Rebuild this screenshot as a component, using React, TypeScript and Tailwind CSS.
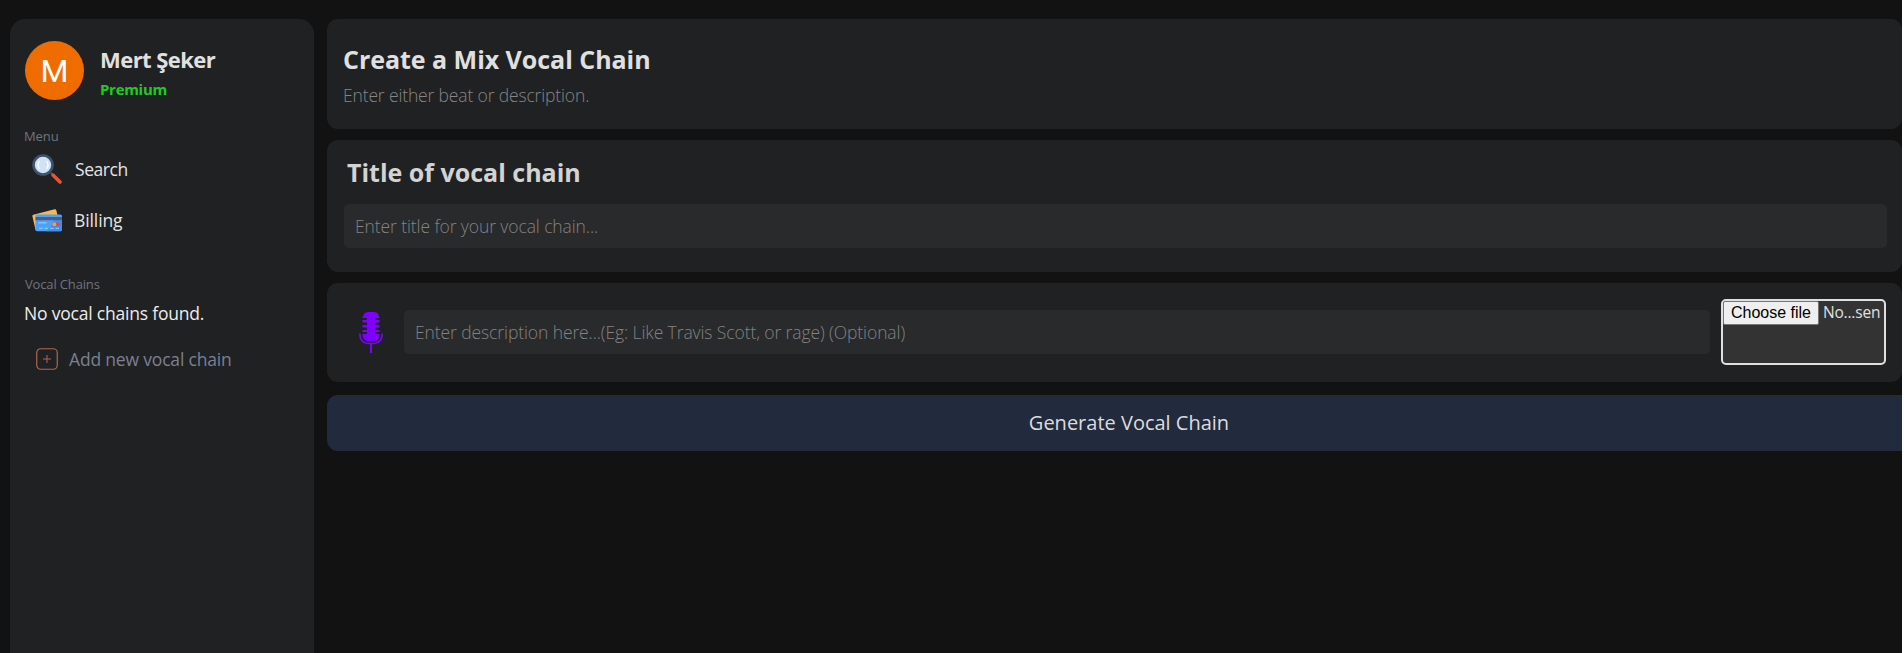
function SearchIcon() {
  return (
    <svg viewBox="0 0 30 30" className="size-[30px] shrink-0">
      <path d="M19 19l2.500 2.500" stroke="#4a5f73" strokeWidth="2" />
      <path d="M21.200 21.200l6.800 6.800" stroke="#e2553a" strokeWidth="3.600" strokeLinecap="round" />
      <circle cx="11" cy="11" r="9.500" fill="#cfe3f3" stroke="#3d536b" strokeWidth="2.600" />
      <path d="M7.200 7.500q-2.400 3.500 0 7M14.800 7.500q2.400 3.500 0 7" stroke="#fff" strokeWidth="1.300" fill="none" strokeLinecap="round" />
    </svg>
  );
}

function CardIcon() {
  return (
    <svg viewBox="0 0 30 30" className="size-[30px] shrink-0">
      <path d="M1.300 9.700L22.600 4.200q1.300-.3 1.700 1L29 24 4.500 25.700q-.8 0-1-.9L.4 11.200q-.2-1.200.9-1.500z" fill="#f3b958" />
      <rect x="3.500" y="9.500" width="26.500" height="16.700" rx="1.600" fill="#4fa0f8" />
      <path d="M22 12h8v12.700q0 1.500-1.500 1.500H14q7-5 8-14z" fill="#438cf0" />
      <rect x="3.500" y="12" width="26.500" height="3.200" fill="#4c5d86" />
      <path d="M6.500 17.800h8" stroke="#8fd0ff" strokeWidth="1.200" />
      <path d="M7 23.300h3.500M12.500 23.300H16M18 23.300h3.500M23.500 23.300H27" stroke="#8ac4ff" strokeWidth="1.300" />
      <circle cx="25.800" cy="19.200" r="1.900" fill="#e8453c" />
      <circle cx="22.400" cy="19.200" r="1.900" fill="#f4a23a" />
    </svg>
  );
}

function PlusIcon() {
  return (
    <svg viewBox="0 0 22 22" className="size-[22px] shrink-0" fill="none" stroke="#b0674a">
      <rect x="0.750" y="0.750" width="20.500" height="20.500" rx="4" strokeWidth="1.200" />
      <path d="M11 7v8M7 11h8" />
    </svg>
  );
}

function MicIcon() {
  return (
    <svg viewBox="0 0 24 42" className="h-[42px] w-6 shrink-0" fill="#7f00ff">
      <path d="M3.500 6Q4.500 0 9 0h6q4.500 0 5.500 6H16v2h4.500v2.500H16V13h4.500v2.500H16V18h4.500v2H16v2h4.500v1q-.5 6-5.500 6H9q-5 0-5.500-6v-1H8v-2H3.500v-2H8v-2.500H3.500V13H8v-2.500H3.500V8H8V6z" />
      <path d="M.8 21.500Q.8 31 9 31.500h6q8.200-.5 8.200-10" fill="none" stroke="#7f00ff" strokeWidth="1.600" />
      <rect x="11" y="31.500" width="2" height="9.500" />
    </svg>
  );
}

const panel = "rounded-[11px] bg-[#202122]";
const input =
  "h-11 min-w-0 flex-1 rounded-[5px] bg-[#292a2b] px-[11px] text-[17.5px] font-light tracking-[-0.1px] text-white outline-none placeholder:text-[#828282]";

export default function App() {
  return (
    <div className="flex h-screen bg-white pr-0.5 font-['Open_Sans','Noto_Sans',sans-serif]">
      <div className="flex h-full min-w-0 flex-1 overflow-hidden bg-[#121212] pt-[19px] pl-2.5">
        <aside className="mr-[13px] h-[700px] w-[304px] shrink-0 rounded-t-[15px] bg-[#202123] px-[15px] pt-[22px]">
          <div className="flex">
            <div className="flex size-[59px] items-center justify-center rounded-full bg-[#ef6c00] pt-px font-['Roboto',sans-serif] text-[32px] text-white">
              M
            </div>
            <div className="ml-4 pt-[3px]">
              <h2 className="text-[22px] leading-[30px] font-bold tracking-[-0.55px] text-[#e0e0e0]">Mert Şeker</h2>
              <p className="mt-[3px] text-[15px] leading-6 font-bold tracking-[-0.3px] text-[#21cb21]">Premium</p>
            </div>
          </div>
          <p className="mt-[25px] -ml-px text-[13px] leading-5 tracking-[-0.1px] text-[#6f7480]">Menu</p>
          <nav>
            <a className="mt-[6px] flex h-[34px] items-center pl-[7px]">
              <SearchIcon />
              <span className="ml-[13px] text-[17.5px] leading-6 tracking-[-0.45px] text-[#e4e4e4]">Search</span>
            </a>
            <a className="mt-[17px] flex h-[34px] items-center pl-[7px]">
              <CardIcon />
              <span className="ml-3 text-[17.5px] leading-6 tracking-[-0.1px] text-[#e4e4e4]">Billing</span>
            </a>
          </nav>
          <p className="mt-[37px] text-[13px] leading-5 tracking-[-0.15px] text-[#6f7480]">Vocal Chains</p>
          <p className="mt-[7px] -ml-px text-[17.5px] leading-6 tracking-[-0.2px] text-[#ececec]">No vocal chains found.</p>
          <button className="mt-[22px] flex items-center pl-[11px]">
            <PlusIcon />
            <span className="ml-[11px] text-[17.5px] leading-6 tracking-[-0.18px] text-[#7b8092]">Add new vocal chain</span>
          </button>
        </aside>
        <main className="flex min-w-0 flex-1 flex-col">
          <header className={`h-[110px] pt-[22px] pl-4 ${panel}`}>
            <h1 className="text-[25px] leading-9 font-bold tracking-[-0.03px] text-[#e0e0e0]">Create a Mix Vocal Chain</h1>
            <p className="mt-[6px] text-[17.5px] leading-6 font-light tracking-[-0.15px] text-[#858585]">
              Enter either beat or description.
            </p>
          </header>
          <section className={`mt-[11px] h-[132px] pt-[14px] pr-[15px] pl-[17px] ${panel}`}>
            <h2 className="pl-[3px] text-[25px] leading-9 font-bold text-[#d3d3d3]">Title of vocal chain</h2>
            <div className="mt-[14px] flex">
              <input className={input} placeholder="Enter title for your vocal chain..." />
            </div>
          </section>
          <section className={`mt-[11px] flex h-[99px] items-start pt-4 pr-4 pl-8 ${panel}`}>
            <div className="mt-[13px]">
              <MicIcon />
            </div>
            <div className="mt-[11px] ml-[21px] flex flex-1">
              <input
                className={input}
                placeholder="Enter description here...(Eg: Like Travis Scott, or rage) (Optional)"
              />
            </div>
            <label className="ml-[11px] flex h-[66px] w-[165px] items-start rounded-[5px] border-2 border-[#e0e0e0] bg-[#333333]">
              <span className="flex h-[24px] w-[96px] items-center justify-center rounded-[2px] border border-[#767676] bg-[#efefef] pb-px font-['Liberation_Sans',sans-serif] text-[16px] whitespace-nowrap text-black">
                Choose file
              </span>
              <span className="ml-1 text-[15.5px] leading-[23px] tracking-[-0.2px] text-[#e0e0e0]">No...sen</span>
            </label>
          </section>
          <button className="mt-[13px] h-14 rounded-l-[11px] bg-[#222a3d] pl-[29px] text-[20px] text-[#dcdcdc]">
            Generate Vocal Chain
          </button>
        </main>
      </div>
    </div>
  );
}
